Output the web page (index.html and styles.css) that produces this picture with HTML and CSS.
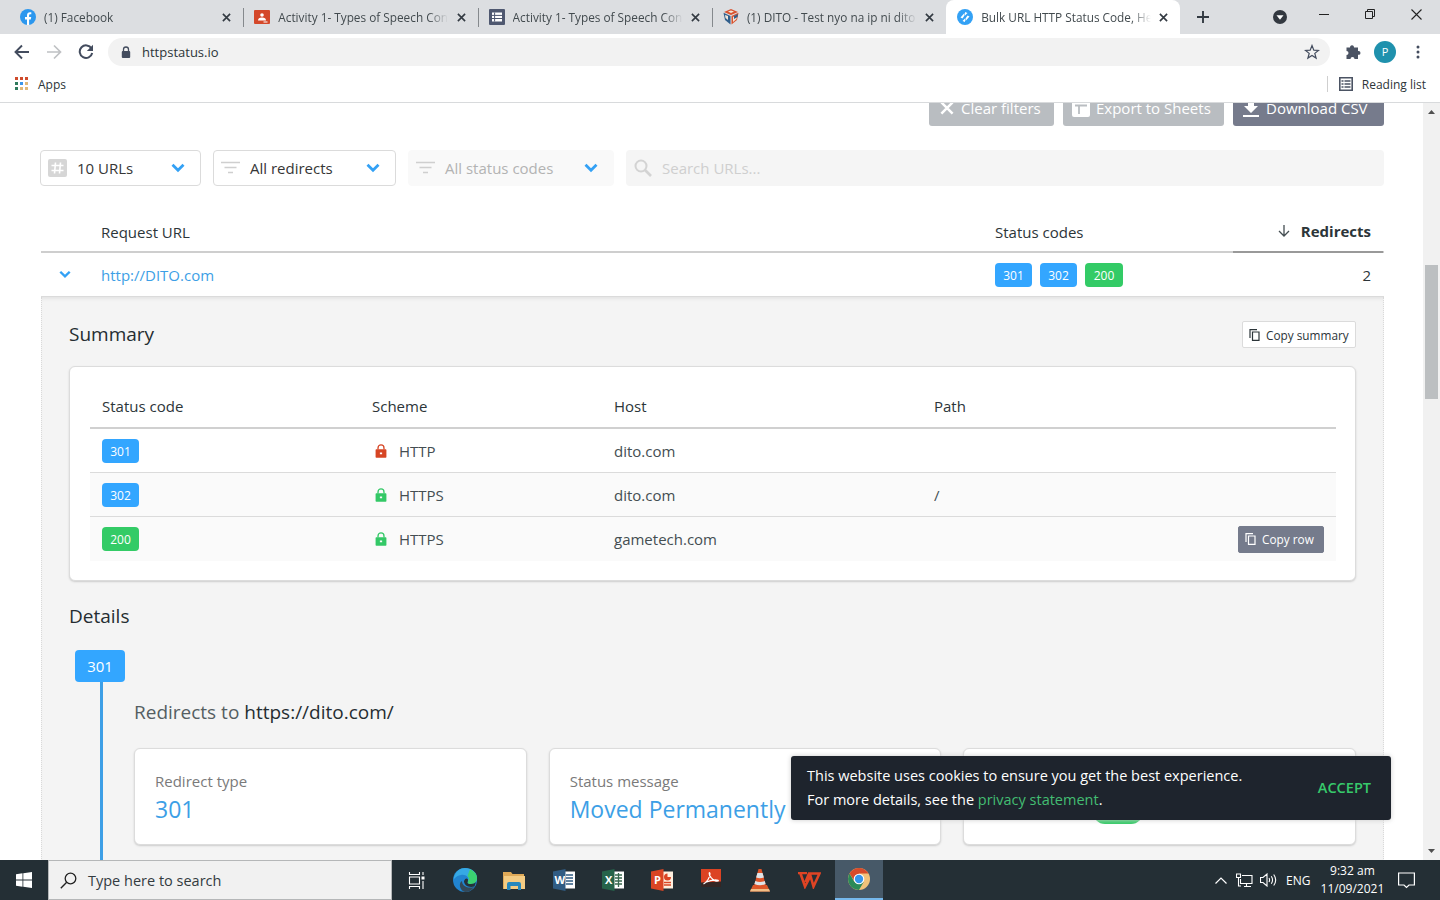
FILE: index.html
```html
<!DOCTYPE html>
<html lang="en">
<head>
	<meta charset="UTF-8">
	<title>Bulk URL HTTP Status Code, Header &amp; Redirect Checker</title>
	<link rel="stylesheet" href="styles.css">
</head>
<body>
	<!-- shared icons -->
	<svg width="0" height="0" class="defs">
		<symbol id="close" viewBox="0 0 10 10"><path d="M1 1l8 8M9 1l-8 8" fill="none" stroke="currentColor" stroke-width="1.8"/></symbol>
		<symbol id="copy" viewBox="0 0 12 12"><path d="M3.5 3h6.5v8.3H3.5zM1 9V.7h7" fill="none" stroke="currentColor" stroke-width="1.2"/></symbol>
		<symbol id="lock" viewBox="0 0 12 15"><path d="M2.8 6V4.2a3.2 3.2 0 0 1 6.4 0V6" fill="none" stroke="currentColor" stroke-width="1.4"/><path fill-rule="evenodd" d="M1 5.5h10q.8 0 .8.8V14q0 .8-.8.8H1q-.8 0-.8-.8V6.300q0-.8.8-.8zM4.800 9v2h2.400V9z" fill="currentColor"/></symbol>
		<symbol id="filter" viewBox="0 0 19 14"><path d="M0 1.500h19M3.500 6.500h12M7 11.500h5" fill="none" stroke="currentColor" stroke-width="1.500"/></symbol>
		<symbol id="chevron" viewBox="0 0 14 10"><path d="M1.500 1.800L7 7.200l5.500-5.400" fill="none" stroke="currentColor" stroke-width="2.800"/></symbol>
	</svg>

	<div class="tabs">
		<div class="tab">
			<svg class="fav" viewBox="0 0 16 16"><circle cx="8" cy="8" r="8" fill="#2c97ee"/><path d="M7 16v-5.500H5V8h2V6.200C7 4.200 8.200 3.200 10 3.200h1.300v2.100h-1c-.9 0-1.200.4-1.200 1.200V8h2.100l-.4 2.500H9.100V16z" fill="#fff"/></svg>
			<span class="tab-name">(1) Facebook</span>
			<svg class="x"><use href="#close"/></svg>
		</div>
		<div class="tab line">
			<svg class="fav" viewBox="0 0 16 16"><rect y="1" width="16" height="14" rx="1" fill="#d4482a"/><circle cx="8" cy="6" r="1.800" fill="#fff"/><path d="M4 11.500q0-3 4-3t4 3zM9.500 12.500h4v1h-4z" fill="#fff"/></svg>
			<span class="tab-name">Activity 1- Types of Speech Context</span>
			<svg class="x"><use href="#close"/></svg>
		</div>
		<div class="tab line">
			<svg class="fav" viewBox="0 0 16 16"><rect width="16" height="16" rx="1" fill="#4f5870"/><path d="M3 3.500h10v9H3z" fill="#fff"/><path d="M3 6.400h10M3 9.500h10M5.600 3.500v9" stroke="#4f5870"/></svg>
			<span class="tab-name">Activity 1- Types of Speech Context</span>
			<svg class="x"><use href="#close"/></svg>
		</div>
		<div class="tab line">
			<svg class="fav" viewBox="0 0 16 16"><path d="M8 0l7 3-7 3-7-3z" fill="#d9532f"/><path d="M.5 3.800L7.500 7v8.500L2 11z" fill="#315f8c"/><path d="M15.500 3.800L8.500 7v8.500L14 11z" fill="#d9532f"/><path d="M5 2.500l3-1 3 1-3 1.500zM2 6l3 1v4L2.500 9zM10 8l4-2-.5 4-3.500 3z" fill="#f2e6d8"/><path d="M11 7l4-2-.5 3-3.500 2z" fill="#315f8c"/></svg>
			<span class="tab-name">(1) DITO - Test nyo na ip ni dito</span>
			<svg class="x"><use href="#close"/></svg>
		</div>
		<div class="tab active">
			<svg class="fav" viewBox="0 0 16 16"><circle cx="8" cy="8" r="8" fill="#33a1f5"/><path d="M3.500 8.500l4-4.500v2.500l-2 3zM12.500 7.500l-4 4.500V9.500l2-3zM8 3l2.500 1L8 6.500zM8 13l-2.500-1L8 9.500z" fill="#fff"/></svg>
			<span class="tab-name">Bulk URL HTTP Status Code, Header</span>
			<svg class="x"><use href="#close"/></svg>
		</div>
		<svg class="plus" viewBox="0 0 12 12"><path d="M6 0v12M0 6h12" stroke="#333a42" stroke-width="1.900"/></svg>
		<div class="win">
			<svg width="14" height="14" viewBox="0 0 14 14" class="drop"><circle cx="7" cy="7" r="7" fill="#333840"/><path d="M3.500 5.300h7L7 9.800z" fill="#fff"/></svg>
			<svg width="10" height="10" viewBox="0 0 10 10"><path d="M0 5.500h10" stroke="#222"/></svg>
			<svg width="10" height="10" viewBox="0 0 10 10"><path d="M.5 2.500h7v7h-7zM2.500 2.500v-2h7v7h-2" fill="none" stroke="#222"/></svg>
			<svg width="11" height="11" viewBox="0 0 11 11"><path d="M.5.5l10 10M10.500.5l-10 10" stroke="#222" stroke-width="1.100"/></svg>
		</div>
	</div>

	<div class="toolbar">
		<svg class="nav" viewBox="0 0 16 16"><path d="M15 8H2M8 1.500L1.500 8 8 14.500" fill="none" stroke="#434c5e" stroke-width="1.900"/></svg>
		<svg class="nav" viewBox="0 0 16 16"><path d="M1 8h13M8 1.500L14.500 8 8 14.500" fill="none" stroke="#bfc1c4" stroke-width="1.700"/></svg>
		<svg class="nav" viewBox="0 0 16 16"><path d="M13.500 4.500A6.300 6.300 0 1 0 14.200 9" fill="none" stroke="#434c5e" stroke-width="2"/><path d="M15 .8v6.200H8.800z" fill="#434c5e"/></svg>
		<div class="address">
			<svg width="10" height="13" viewBox="0 0 10 13"><path d="M2.500 6V3.500a2.500 2.500 0 0 1 5 0V6" fill="none" stroke="#434c5e" stroke-width="1.300"/><rect x=".8" y="5" width="8.400" height="7" rx="1" fill="#434c5e"/></svg>
			<span>httpstatus.io</span>
			<svg class="star" width="16" height="16" viewBox="0 0 16 16"><path d="M8 1.500l1.800 4.600 4.700.3-3.700 3 1.300 4.700L8 11.400l-4.100 2.700 1.300-4.700-3.700-3 4.700-.3z" fill="none" stroke="#434c5e" stroke-width="1.200"/></svg>
		</div>
		<svg class="puzzle" width="16" height="16" viewBox="0 0 16 16"><path d="M1.500 3.500H5a2 2 0 0 1 4-.5v.5h4V7h.6a1.900 1.900 0 0 1 0 3.800H13V15H9.500a2 2 0 0 0-4 0h-4v-4a2 2 0 0 0 0-4z" fill="#4b5363"/></svg>
		<div class="avatar">P</div>
		<svg width="4" height="14" viewBox="0 0 4 14" class="dots"><g fill="#434c5e"><circle cx="2" cy="2" r="1.500"/><circle cx="2" cy="7" r="1.500"/><circle cx="2" cy="12" r="1.500"/></g></svg>
	</div>

	<div class="bookmarks">
		<svg width="14" height="14" viewBox="0 0 14 14"><path d="M0 0h3v3H0zM5 0h3v3H5zM10 0h3v3h-3z" fill="#cf4b2c"/><path d="M0 5h3v3H0zM0 10h3v3H0z" fill="#2f7a5c"/><path d="M5 5h3v3H5z" fill="#3a96ea"/><path d="M10 5h3v3h-3zM5 10h3v3H5zM10 10h3v3h-3z" fill="#e0b878"/></svg>
		<span class="apps">Apps</span>
		<div class="reading">
			<svg width="14" height="14" viewBox="0 0 14 14"><path d="M.8.800h12.400v12.400H.8z" fill="none" stroke="#4b5363" stroke-width="1.600"/><path d="M2.500 4h2M5.500 4h6M2.500 7h2M5.500 7h6M2.500 10h2M5.500 10h6" stroke="#4b5363" stroke-width="1.700"/></svg>
			<span>Reading list</span>
		</div>
	</div>

	<div class="view">
		<div class="page">
			<div class="actions">
				<a class="btn clear"><svg width="14" height="14"><use href="#close"/></svg>Clear filters</a>
				<a class="btn sheets"><svg width="18" height="18" viewBox="0 0 18 18"><rect width="18" height="18" rx="2" fill="#fff"/><path d="M3 6.500h12M7 6.500V15" stroke="#b9bdc1" stroke-width="1.800"/></svg>Export to Sheets</a>
				<a class="btn csv"><svg width="16" height="18" viewBox="0 0 16 18"><path d="M5 1h6v6h4l-7 7-7-7h4zM0 16h16v2H0z" fill="#fff"/></svg>Download CSV</a>
			</div>

			<div class="filters">
				<div class="select urls">
					<svg width="19" height="18" viewBox="0 0 19 18"><rect width="19" height="18" rx="2" fill="#d6d6d6"/><path d="M7.500 3.500l-1 11M12.500 3.500l-1 11M3.500 6.500h12M3.500 11.500h12" stroke="#fff" stroke-width="1.600"/></svg>
					<span>10 URLs</span>
					<svg class="arrow"><use href="#chevron"/></svg>
				</div>
				<div class="select redirects">
					<svg width="19" height="14"><use href="#filter"/></svg>
					<span>All redirects</span>
					<svg class="arrow"><use href="#chevron"/></svg>
				</div>
				<div class="select codes">
					<svg width="19" height="14"><use href="#filter"/></svg>
					<span>All status codes</span>
					<svg class="arrow"><use href="#chevron"/></svg>
				</div>
				<div class="search">
					<svg width="18" height="18" viewBox="0 0 18 18"><circle cx="7" cy="7" r="5.500" fill="none" stroke="#d3d3d3" stroke-width="2"/><path d="M11 11l6 6" stroke="#d3d3d3" stroke-width="2.600"/></svg>
					<span>Search URLs...</span>
				</div>
			</div>

			<div class="result head">
				<span></span>
				<span class="th">Request URL</span>
				<span class="th">Status codes</span>
				<span class="sorted"><svg width="12" height="12" viewBox="0 0 12 12"><path d="M6 0v11M1 6l5 5 5-5" fill="none" stroke="#444e52" stroke-width="1.300"/></svg><b>Redirects</b></span>
			</div>
			<div class="result row">
				<svg class="open"><use href="#chevron"/></svg>
				<a class="url">http://DITO.com</a>
				<div class="badges"><span class="code">301</span><span class="code">302</span><span class="code ok">200</span></div>
				<span class="num">2</span>
			</div>

			<div class="panel">
				<div class="panel-top">
					<h2>Summary</h2>
					<a class="copy"><svg width="12" height="12"><use href="#copy"/></svg>Copy summary</a>
				</div>
				<div class="summary">
					<div class="hop hop-head">
						<span>Status code</span><span>Scheme</span><span>Host</span><span>Path</span>
					</div>
					<div class="hop">
						<span><i class="code">301</i></span>
						<span class="scheme bad"><svg><use href="#lock"/></svg>HTTP</span>
						<span>dito.com</span>
						<span></span>
					</div>
					<div class="hop gray">
						<span><i class="code">302</i></span>
						<span class="scheme"><svg><use href="#lock"/></svg>HTTPS</span>
						<span>dito.com</span>
						<span>/</span>
					</div>
					<div class="hop gray">
						<span><i class="code ok">200</i></span>
						<span class="scheme"><svg><use href="#lock"/></svg>HTTPS</span>
						<span class="host3">gametech.com</span>
						<span><a class="copy dark"><svg width="12" height="12"><use href="#copy"/></svg>Copy row</a></span>
					</div>
				</div>

				<h2 class="details">Details</h2>
				<div class="step">
					<div class="step-code">301</div>
					<div class="step-body">
						<p class="to">Redirects to <b>https://dito.com/</b></p>
						<div class="cards">
							<div class="card"><p class="label type">Redirect type</p><p class="value">301</p></div>
							<div class="card"><p class="label msg">Status message</p><p class="value moved">Moved Permanently</p></div>
							<div class="card last"><div class="pill"></div></div>
						</div>
					</div>
				</div>
			</div>

			<div class="cookie">
				<p><span class="c1">This website uses cookies to ensure you get the best experience.</span><br><span class="c2">For more details, see the <a>privacy statement</a>.</span></p>
				<b>ACCEPT</b>
			</div>
		</div>
		<div class="scroll">
			<svg width="7" height="4" viewBox="0 0 7 4"><path d="M0 4h7L3.500 0z" fill="#505050"/></svg>
			<div class="thumb"></div>
			<svg width="7" height="4" viewBox="0 0 7 4" class="down"><path d="M0 0h7L3.500 4z" fill="#505050"/></svg>
		</div>
	</div>

	<div class="taskbar">
		<div class="start"><svg width="16" height="16" viewBox="0 0 16 16"><path d="M0 2.200l6.500-.9v6.300H0zM7.300 1.200L16 0v7.600H7.300zM0 8.400h6.500v6.300L0 13.800zM7.300 8.400H16V16l-8.700-1.200z" fill="#fff"/></svg></div>
		<div class="find">
			<svg width="17" height="17" viewBox="0 0 17 17"><circle cx="10.500" cy="6.500" r="5.300" fill="none" stroke="#222" stroke-width="1.300"/><path d="M6.700 10.300L.8 16.200" stroke="#222" stroke-width="1.400"/></svg>
			<span>Type here to search</span>
		</div>
		<div class="apps-bar">
			<!-- task view -->
			<div class="app"><svg width="17" height="17" viewBox="0 0 17 17"><path d="M1.500 0v2.500h10V0M1.500 17v-2.500h10V17M1.500 5h10v7h-10zM15 0v3M15 9v8" fill="none" stroke="#fff" stroke-width="1.100"/><path d="M13.500 4.500h3v3h-3z" fill="#fff"/></svg></div>
			<!-- edge -->
			<div class="app"><svg width="24" height="24" viewBox="0 0 24 24"><circle cx="12" cy="12" r="12" fill="#2184d0"/><path d="M1 9C3 3 7 0 12 0c7 0 12 4.500 12 10 0 4-3 6-6 6-3 0-4-1.200-3-2.600C17 9 12 6 8 7c-3 .5-5 1.500-7 4z" fill="#36a9e4"/><path d="M17 1.200C21.500 3 24 6.500 24 10c0 4-3 6-6 6-3 0-4-1.200-3-2.600 1.500-2 1-4-.5-5.500z" fill="#3bd170"/><path d="M9 13c0 4 4 8 12 6-2 3-5 5-9 5-5-1-7-9-3-11z" fill="#334858"/><path d="M14.800 13.400c-1 1.600.2 2.600 3.200 2.600 2 0 4-1 5-2l-1.500 4.500C15 20 11 17 11 13q2-4 4-1.500z" fill="#253238"/></svg></div>
			<!-- explorer -->
			<div class="app"><svg width="22" height="19" viewBox="0 0 22 19"><path d="M0 1h8l1.500 2H21v15H0z" fill="#dfa957"/><path d="M1 5h21v13H1z" fill="#f4cc83"/><path d="M4 19v-6q0-2 2-2h10q2 0 2 2v6h-3v-4H7.500v4z" fill="#2688bd"/></svg></div>
			<!-- word -->
			<div class="app"><svg width="22" height="22" viewBox="0 0 22 22"><path d="M11 2.500h11v17H11z" fill="#fff"/><path d="M13 6h7M13 9h7M13 12h7M13 15h7" stroke="#315c83" stroke-width="1.300"/><path d="M0 2.500L12.500 0v22L0 19.500z" fill="#315c83"/><text x="1.500" y="15" class="glyph">W</text></svg></div>
			<!-- excel -->
			<div class="app"><svg width="22" height="22" viewBox="0 0 22 22"><path d="M11 2.500h11v17H11z" fill="#fff"/><path d="M13 6h7M13 9h7M13 12h7M13 15h7M16.500 4v14" stroke="#38684f" stroke-width="1.300"/><path d="M0 2.500L12.500 0v22L0 19.500z" fill="#26634a"/><text x="3" y="15" class="glyph">X</text></svg></div>
			<!-- powerpoint -->
			<div class="app"><svg width="22" height="22" viewBox="0 0 22 22"><path d="M11 2.500h11v17H11z" fill="#fff0df"/><circle cx="16.500" cy="8" r="3.500" fill="#da4524"/><path d="M16.500 8V4h4v4z" fill="#fff0df"/><path d="M13 13.500h7M13 16h7" stroke="#da4524" stroke-width="1.300"/><path d="M0 2.500L12.500 0v22L0 19.500z" fill="#da4524"/><text x="3" y="15" class="glyph">P</text></svg></div>
			<!-- acrobat -->
			<div class="app"><svg width="20" height="22" viewBox="0 0 20 22"><path d="M0 0h20v18H0z" fill="#dc4323"/><path d="M0 13.500l20-1V18H0z" fill="#352624"/><path d="M2.500 15c3-1.500 7-7 6.500-10.500C8.500 2 7 5 10 8.500c2 2.500 5 4 7 3.500 2-1-4-2.500-13 1.500" fill="none" stroke="#fff" stroke-width="1.200"/></svg></div>
			<!-- vlc -->
			<div class="app"><svg width="20" height="23" viewBox="0 0 20 23"><path d="M3 16h14l3 6.500H0z" fill="#dc5a2b"/><path d="M1 20h18l1 2.500H0z" fill="#f1bd86"/><path d="M8.500 0h3L16 17q-6 3-12 0z" fill="#e05429"/><path d="M7.400 4h5.200l1.300 4.500q-4 1.500-7.800 0zM5.300 12q4.700 2 9.500 0l.8 3q-5.500 2.500-11.200 0z" fill="#dfe4e8"/></svg></div>
			<!-- wps -->
			<div class="app"><svg width="23" height="17" viewBox="0 0 23 17"><path d="M0 1h9M2.500 1.500l4.500 13L12.500 4l3 10.500L21.500 1.500H11L7.500 10" fill="none" stroke="#df4424" stroke-width="2.600"/></svg></div>
			<!-- chrome -->
			<div class="app on"><svg width="22" height="22" viewBox="0 0 22 22"><circle cx="11" cy="11" r="11" fill="#f0c27a"/><path d="M1.500 5.500A11 11 0 0 1 20.500 5.500H11L7 14z" fill="#d64b2b"/><path d="M1.500 5.500A11 11 0 0 0 11 22l4.800-8.200L11 15 6.300 13.700z" fill="#2c8a58"/><circle cx="11" cy="11" r="5.300" fill="#fff"/><circle cx="11" cy="11" r="4.200" fill="#3595ec"/></svg></div>
		</div>
		<div class="tray">
			<svg width="12" height="7" viewBox="0 0 12 7"><path d="M.5 6.500L6 1l5.500 5.500" fill="none" stroke="#fff" stroke-width="1.200"/></svg>
			<svg width="17" height="15" viewBox="0 0 17 15"><path d="M6 2.500h10v8H4.500V6M8 13.500h7M10.500 10.500v3M.5 1h4v3.500h-4zM2.500 4.500V13H5" fill="none" stroke="#fff" stroke-width="1.100"/></svg>
			<svg width="17" height="14" viewBox="0 0 17 14"><path d="M.5 4.500h2.500L7 1v12L3 9.500H.5zM9 5q1.200 2 0 4M11.300 3.300q2.500 3.700 0 7.400M13.700 1.500q4 5.500 0 11" fill="none" stroke="#fff" stroke-width="1.100"/></svg>
			<span class="lang">ENG</span>
			<div class="clock"><span class="time">9:32 am</span><span class="date">11/09/2021</span></div>
			<svg class="note" width="17" height="17" viewBox="0 0 17 17"><path d="M.6 1h15.800v12H11l-2.500 2.500L6 13H.6z" fill="none" stroke="#fff" stroke-width="1.200"/></svg>
		</div>
	</div>
</body>
</html>
```
FILE: styles.css
```css
*{
	box-sizing: border-box;
	margin: 0;
	padding: 0;
}

body{
	width: 1440px;
	height: 900px;
	overflow: hidden;
	display: flex;
	flex-direction: column;
	background: #fff;
	color: #2c3539;
	font-family: "Open Sans", "Noto Sans", sans-serif;
	font-size: 15px;
	white-space: nowrap;
}

svg{
	flex: none;
	display: block;
}

.defs{
	position: absolute;
}

/* browser */
.tabs{
	height: 34px;
	flex: none;
	display: flex;
	background: #dcdee1;
	padding-left: 9px;
}

.tab{
	width: 234.3px;
	height: 34px;
	padding: 0 12px 0 11px;
	display: flex;
	align-items: center;
	font-size: 11.8px;
	color: #424a4e;
}

.tab.line{
	background: linear-gradient(#85898d, #85898d) 0 8px / 1px 19px no-repeat;
}

.tab.active{
	background: #fff;
	border-radius: 8px 8px 0 0;
}

.fav{
	width: 16px;
	height: 16px;
	margin-right: 8px;
}

.tab-name{
	width: 170px;
	overflow: hidden;
	-webkit-mask-image: linear-gradient(90deg, #000 150px, transparent 170px);
	mask-image: linear-gradient(90deg, #000 150px, transparent 170px);
}

.x{
	width: 9px;
	height: 9px;
	margin-left: auto;
	color: #333a42;
}

.plus{
	width: 12px;
	height: 12px;
	margin: 11px 0 0 17px;
}

.win{
	margin-left: auto;
	padding: 9px 18px 0 0;
	display: flex;
	gap: 36px;
}

.win .drop{
	margin: 1px -4px 0 0;
}

.toolbar{
	height: 36px;
	flex: none;
	display: flex;
	align-items: center;
	padding-left: 14px;
}

.nav{
	width: 16px;
	height: 16px;
	margin-right: 16px;
}

.address{
	width: 1222px;
	height: 28px;
	margin-left: -2px;
	padding: 0 10px 0 13px;
	border-radius: 14px;
	background: #f2f2f2;
	display: flex;
	align-items: center;
	font-size: 13px;
}

.address span{
	margin-left: 11px;
}

.star{
	margin-left: auto;
}

.puzzle{
	margin-left: 15px;
}

.avatar{
	width: 22px;
	height: 22px;
	margin: 0 20px 0 13px;
	border-radius: 50%;
	background: #1f91ad;
	color: #fff;
	font-size: 11px;
	line-height: 22px;
	text-align: center;
}

.bookmarks{
	height: 33px;
	flex: none;
	display: flex;
	align-items: center;
	padding: 0 14px 4px 15px;
	border-bottom: 1px solid #d8dadc;
	font-size: 12px;
}

.apps{
	margin-left: 9px;
}

.reading{
	margin-left: auto;
	height: 16px;
	display: flex;
	align-items: center;
	gap: 9px;
	padding-left: 11px;
	border-left: 1px solid #cfcfcf;
}

/* page */
.view{
	height: 757px;
	flex: none;
	display: flex;
}

.page{
	position: relative;
	width: 1423px;
	height: 757px;
	overflow: hidden;
	padding: 0 39px 0 40px;
}

.actions{
	display: flex;
	justify-content: flex-end;
	gap: 9px;
	margin-top: -13px;
}

.btn{
	height: 36px;
	display: flex;
	align-items: center;
	gap: 7px;
	padding-left: 9px;
	border-radius: 3px;
	background: #b9bdc1;
	color: #fff;
}

.clear{
	width: 125px;
	padding-left: 11px;
}

.sheets{
	width: 161px;
	gap: 6px;
}

.csv{
	width: 151px;
	padding-left: 10px;
	background: #767b8c;
}

.filters{
	display: flex;
	gap: 12px;
	margin-top: 24px;
}

.select{
	height: 36px;
	border: 1px solid #dbdbdb;
	border-radius: 4px;
	display: flex;
	align-items: center;
	padding: 0 15px 0 7px;
	color: #363636;
}

.select > svg:first-child{
	margin-right: 10px;
	color: #cfcfcf;
}

.urls{
	width: 161px;
}

.redirects{
	width: 183px;
}

.codes{
	width: 206px;
	background: #f9f9f9;
	border-color: #f9f9f9;
	color: #b3b3b3;
}

.select .arrow{
	width: 14px;
	height: 10px;
	margin-left: auto;
	color: #33a1f5;
}

.search{
	flex: 1;
	height: 36px;
	display: flex;
	align-items: center;
	gap: 10px;
	padding-left: 8px;
	border-radius: 4px;
	background: #f5f5f5;
	color: #cfcfcf;
}

.result{
	display: grid;
	grid-template-columns: 60px 894px 238px 150px;
	align-items: center;
	margin: 0 0 0 1px;
}

.head{
	height: 67px;
	padding-top: 24px;
	border-bottom: 2px solid #cecece;
}

.th, .hop-head{
	font-weight: 500;
}

.sorted{
	height: 43px;
	display: flex;
	align-items: center;
	justify-content: flex-end;
	gap: 11px;
	padding-right: 12px;
	border-bottom: 2px solid #999;
}

.row{
	height: 44px;
	border-bottom: 1px solid #dbdbdb;
}

.open{
	width: 12px;
	height: 9px;
	margin-left: 18px;
	color: #33a1f5;
}

.url{
	color: #3d9fe6;
}

.badges{
	display: flex;
	gap: 8px;
}

.code{
	width: 37px;
	height: 24px;
	border-radius: 4px;
	background: #33a6ff;
	color: #fff;
	font-size: 12px;
	font-style: normal;
	line-height: 25px;
	text-align: center;
	display: block;
}

.ok{
	width: 38px;
	background: #33cb66;
}

.num{
	padding-right: 12px;
	text-align: right;
}

.panel{
	height: 600px;
	margin: 0 0 0 1px;
	padding: 24px 27px 0;
	border: 1px dotted #d9d9d9;
	border-width: 0 1px;
	background: #f4f4f4;
	box-shadow: inset 0 4px 4px -3px #ddd;
}

.panel-top{
	height: 27px;
	display: flex;
	justify-content: space-between;
	align-items: center;
}

h2{
	font-size: 19px;
	font-weight: 500;
	line-height: 26px;
	color: #252d31;
}

.panel-top h2{
	position: relative;
	top: -1px;
}

.copy{
	width: 114px;
	height: 27px;
	display: flex;
	align-items: center;
	gap: 5px;
	padding-left: 6px;
	border: 1px solid #dbdbdb;
	border-radius: 2px;
	background: #fff;
	font-size: 11.8px;
}

.summary, .card{
	border: 1px solid #dcdcdc;
	border-radius: 6px;
	background: #fff;
	box-shadow: 0 1px 2px #ccc;
}

.summary{
	height: 215px;
	margin-top: 18px;
	padding: 18px 19px 0 20px;
}

.hop{
	height: 44px;
	display: grid;
	grid-template-columns: 270px 242px 320px 1fr;
	align-items: center;
	padding-left: 12px;
	border-bottom: 1px solid #dbdbdb;
	color: #444e52;
}

.hop-head{
	border-bottom: 2px solid #d0d0d0;
	color: #2c3539;
}

.gray{
	background: #fafafa;
}

.hop:last-child{
	border-bottom: 0;
}

.summary .code{
	width: 37px;
}

.scheme{
	display: flex;
	align-items: center;
	gap: 12px;
}

.scheme svg{
	width: 12px;
	height: 14px;
	margin-left: 3px;
	color: #33c866;
}

.scheme.bad svg{
	color: #d64524;
}

.dark{
	width: 86px;
	margin: 0 12px 0 auto;
	background: #757b8c;
	border-color: #757b8c;
	color: #fff;
}

.details{
	margin-top: 22px;
}

.step{
	margin: 21px 0 0 6px;
}

.step-code{
	width: 50px;
	height: 32px;
	border-radius: 4px;
	background: #33a6ff;
	color: #fff;
	line-height: 32px;
	text-align: center;
}

.step-body{
	height: 200px;
	margin-left: 25px;
	padding: 16px 0 0 31px;
	border-left: 3px solid #3d9fe6;
}

.to{
	height: 28px;
	font-size: 19px;
	line-height: 28px;
	color: #555e62;
}

.to b{
	font-weight: 500;
	color: #252d31;
}

.cards{
	display: grid;
	grid-template-columns: 1fr 1fr 1fr;
	gap: 22px;
	margin-top: 22px;
}

.card{
	height: 97px;
	padding: 20px 20px 0;
}

.label{
	line-height: 24px;
	color: #7a7a7a;
}

.value{
	font-size: 23px;
	line-height: 32px;
	color: #3d9fe6;
}

.pill{
	width: 50px;
	height: 32px;
	margin: 23px 0 0 109px;
	border-radius: 12px;
	background: #33cb66;
}

.cookie{
	position: absolute;
	left: 791px;
	top: 653px;
	width: 600px;
	height: 64px;
	padding: 0 20px 0 16px;
	display: flex;
	align-items: center;
	justify-content: space-between;
	border-radius: 3px;
	background: #1e242d;
	box-shadow: 0 0 5px #ccc;
	color: #fff;
	font-size: 14.5px;
	line-height: 24px;
}

.cookie a{
	color: #43bd72;
}

.cookie b{
	color: #37c96b;
	font-weight: 600;
}

.scroll{
	width: 17px;
	background: #f1f1f1;
	display: flex;
	flex-direction: column;
	align-items: center;
	padding: 7px 0;
}

.thumb{
	width: 13px;
	height: 134px;
	margin-top: 151px;
	background: #bcbfc1;
}

.down{
	margin-top: auto;
}

/* taskbar */
.taskbar{
	height: 40px;
	flex: none;
	display: flex;
	background: #242f35;
	color: #fff;
}

.start{
	width: 48px;
	display: flex;
	align-items: center;
	justify-content: center;
}

.find{
	width: 344px;
	display: flex;
	align-items: center;
	gap: 11px;
	padding-left: 11px;
	border: 1px solid #b5b7b8;
	background: #f1f1f1;
	color: #333b3f;
	font-size: 14.500px;
}

.apps-bar{
	display: flex;
	gap: 1.200px;
}

.app{
	width: 48px;
	display: flex;
	align-items: center;
	justify-content: center;
}

.app.on{
	background: #475968;
	border-bottom: 2px solid #76b9ed;
}

.glyph{
	font-size: 11px;
	font-weight: 700;
	fill: #fff;
}

.tray{
	margin-left: auto;
	width: 225px;
	display: flex;
	align-items: center;
	font-size: 12px;
}

.tray svg{
	margin-right: 9px;
}

.tray svg + svg{
	margin-right: 7px;
}

.lang{
	margin-left: 2px;
}

.clock{
	width: 84px;
	display: flex;
	flex-direction: column;
	align-items: center;
	line-height: 18px;
}

.tray .note{
	margin-left: 4px;
}
```
